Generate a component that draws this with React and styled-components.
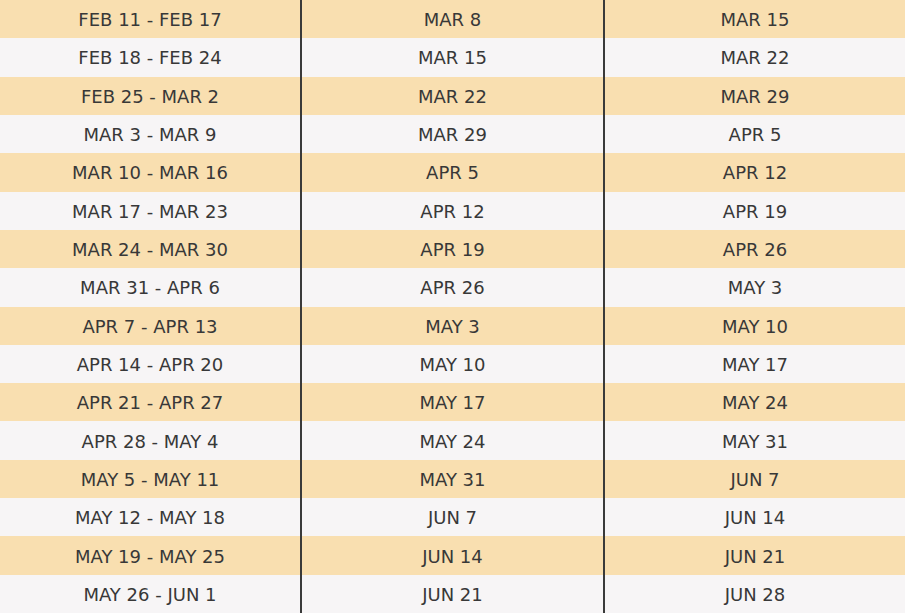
import React from 'react';
import styled, { createGlobalStyle } from 'styled-components';

const GlobalStyle = createGlobalStyle`
  html, body {
    margin: 0;
    padding: 0;
    background: #f7f5f6;
  }
`

const Table = styled.div`
  width: 905px;
  height: 613px;
  display: grid;
  grid-template-columns: 300px 303px 1fr;
  grid-template-rows: repeat(16, 1fr);
  font-family: "DejaVu Sans", sans-serif;
  font-size: 18px;
  color: #383838;
  overflow: hidden;
`

const Cell = styled.div`
  display: flex;
  align-items: center;
  justify-content: center;
  padding-top: 1px;
  background: ${(p) => (p.$shade ? '#f9dfb0' : '#f7f5f6')};
  border-left: ${(p) => (p.$divider ? '2px solid #3a3a3a' : 'none')};
  white-space: nowrap;
`

const rows = [
  ['FEB 11 - FEB 17', 'MAR 8', 'MAR 15'],
  ['FEB 18 - FEB 24', 'MAR 15', 'MAR 22'],
  ['FEB 25 - MAR 2', 'MAR 22', 'MAR 29'],
  ['MAR 3 - MAR 9', 'MAR 29', 'APR 5'],
  ['MAR 10 - MAR 16', 'APR 5', 'APR 12'],
  ['MAR 17 - MAR 23', 'APR 12', 'APR 19'],
  ['MAR 24 - MAR 30', 'APR 19', 'APR 26'],
  ['MAR 31 - APR 6', 'APR 26', 'MAY 3'],
  ['APR 7 - APR 13', 'MAY 3', 'MAY 10'],
  ['APR 14 - APR 20', 'MAY 10', 'MAY 17'],
  ['APR 21 - APR 27', 'MAY 17', 'MAY 24'],
  ['APR 28 - MAY 4', 'MAY 24', 'MAY 31'],
  ['MAY 5 - MAY 11', 'MAY 31', 'JUN 7'],
  ['MAY 12 - MAY 18', 'JUN 7', 'JUN 14'],
  ['MAY 19 - MAY 25', 'JUN 14', 'JUN 21'],
  ['MAY 26 - JUN 1', 'JUN 21', 'JUN 28'],
]

export default function App() {
  return (
    <>
      <GlobalStyle />
      <Table>
        {rows.map((row, i) =>
          row.map((text, j) => (
            <Cell key={i + '-' + j} $shade={i % 2 === 0} $divider={j > 0}>
              {text}
            </Cell>
          ))
        )}
      </Table>
    </>
  );
}
